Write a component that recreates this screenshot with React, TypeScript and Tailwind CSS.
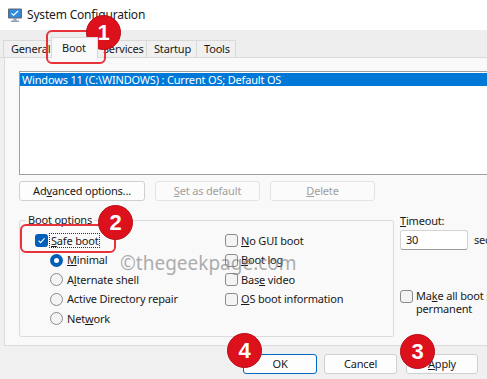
import React from 'react';

function SysIcon() {
  return (
    <svg width="16" height="16" viewBox="0 0 16 16">
      <rect x="1" y="1.5" width="14" height="10" rx="1" fill="#5b6b7c" />
      <rect x="2.2" y="2.7" width="11.6" height="7.6" fill="#2f8be0" />
      <path d="M4.5 6.4 L6.6 8.3 L11 4" fill="none" stroke="#ffffff" strokeWidth="1.2" />
      <rect x="6.5" y="11.5" width="3" height="2" fill="#8c98a5" />
      <rect x="4" y="13.5" width="8" height="1.5" rx="0.5" fill="#8c98a5" />
    </svg>
  );
}

function Check({ checked = false }: { checked?: boolean }) {
  if (checked) {
    return (
      <span className="w-[13px] h-[13px] rounded-[3px] bg-[#005fb8] flex items-center justify-center shrink-0">
        <svg width="9" height="9" viewBox="0 0 9 9">
          <path d="M1.6 4.7 L3.6 6.6 L7.5 2.4" fill="none" stroke="#ffffff" strokeWidth="1.1" />
        </svg>
      </span>
    );
  }
  return <span className="block w-[13px] h-[13px] rounded-[3px] border border-[#8b8b8b] bg-[#f4f4f4] shrink-0" />;
}

function Radio({ checked = false }: { checked?: boolean }) {
  if (checked) {
    return (
      <span className="w-[13px] h-[13px] rounded-full bg-[#005fb8] flex items-center justify-center shrink-0">
        <span className="w-[5px] h-[5px] rounded-full bg-white" />
      </span>
    );
  }
  return <span className="block w-[13px] h-[13px] rounded-full border border-[#8b8b8b] bg-[#f4f4f4] shrink-0" />;
}

function Btn({ children, w, disabled = false, primary = false }: { children: React.ReactNode; w: string; disabled?: boolean; primary?: boolean }) {
  return (
    <div
      className={`${w} h-[20px] shrink-0 rounded-[3px] border flex items-center justify-center ${
        disabled
          ? 'border-[#e3e3e3] bg-[#fbfbfb] text-[#a0a0a0]'
          : primary
          ? 'border-[#0067c0] bg-[#fdfdfd] text-[#1a1a1a]'
          : 'border-[#d0d0d0] bg-[#fdfdfd] text-[#1a1a1a]'
      }`}
    >
      {children}
    </div>
  );
}

function Badge({ n, className }: { n: number; className: string }) {
  return (
    <div
      className={`absolute w-[35px] h-[35px] rounded-full bg-[#dd111b] border border-[#b80d15] text-white font-['Liberation_Sans',sans-serif] font-bold text-[22px] tracking-normal flex items-center justify-center ${className}`}
    >
      {n}
    </div>
  );
}

const tabs = [
  { label: 'General', w: 'w-[50px]' },
  { label: 'Boot', w: 'w-[47px]' },
  { label: 'Services', w: 'w-[52px]' },
  { label: 'Startup', w: 'w-[51px]' },
  { label: 'Tools', w: 'w-[40px]' },
];

export default function App() {
  return (
    <div className="relative w-[487px] h-[379px] overflow-hidden bg-[#f0f0f0] font-['Noto_Sans',sans-serif] text-[11px] tracking-[-0.18px] text-[#1a1a1a]">
      {/* title bar */}
      <div className="h-[30px] bg-white flex items-center pl-[7px] gap-[4px]">
        <SysIcon />
        <span className="text-[12px]">System Configuration</span>
      </div>

      {/* tab strip */}
      <div className="h-[28px] bg-[#eeeeee] border-b border-[#dadada] flex items-end pl-[3px]">
        {tabs.map(({ label, w }) => {
          const active = label === 'Boot';
          return (
            <div
              key={label}
              className={`relative shrink-0 overflow-hidden border border-b-0 border-[#d9d9d9] flex items-center whitespace-nowrap ${w} ${
                active
                  ? 'h-[21px] -mb-px -mx-[2px] bg-[#f9f9f9] z-10 pl-[10px]'
                  : 'h-[17px] bg-[#f0f0f0] pl-[7px] -ml-px first:ml-0'
              }`}
            >
              {label}
            </div>
          );
        })}
      </div>

      {/* panel */}
      <div className="ml-[4px] h-[288px] border-l border-b border-[#dcdcdc] bg-[#f9f9f9] pl-[14px] pt-[13px]">
        <div className="w-[480px] h-[104px] border border-[#a0a0a0] bg-white pt-[1px]">
          <div className="h-[13px] bg-[#0078d7] text-white pl-[2px] leading-[13px] whitespace-nowrap">
            Windows 11 (C:\WINDOWS) : Current OS; Default OS
          </div>
        </div>

        <div className="mt-[6px] flex gap-[10px]">
          <Btn w="w-[126px]">
            Ad<u>v</u>anced options...
          </Btn>
          <Btn w="w-[105px]" disabled>
            <u>S</u>et as default
          </Btn>
          <Btn w="w-[105px]" disabled>
            <u>D</u>elete
          </Btn>
        </div>

        <div className="mt-[12px] flex">
          <fieldset className="w-[375px] h-[124px] shrink-0 border border-[#dcdcdc] rounded-[2px]">
            <legend className="ml-[6px] px-[2px] leading-[14px]">Boot options</legend>
            <div className="pl-[15px] pt-[4px] grid grid-cols-[190px_1fr]">
              <div className="flex flex-col">
                <div className="h-[19.5px] flex items-center gap-[1px]">
                  <Check checked />
                  <span className="border border-dotted border-[#333] px-[1px] leading-[13px]">
                    <u>S</u>afe boot
                  </span>
                </div>
                <div className="h-[19.5px] flex items-center gap-[4px] pl-[15px]">
                  <Radio checked />
                  <span>
                    <u>M</u>inimal
                  </span>
                </div>
                <div className="h-[19.5px] flex items-center gap-[4px] pl-[15px]">
                  <Radio />
                  <span>
                    A<u>l</u>ternate shell
                  </span>
                </div>
                <div className="h-[19.5px] flex items-center gap-[4px] pl-[15px]">
                  <Radio />
                  <span>Active Directory repair</span>
                </div>
                <div className="h-[19.5px] flex items-center gap-[4px] pl-[15px]">
                  <Radio />
                  <span>
                    Net<u>w</u>ork
                  </span>
                </div>
              </div>
              <div className="flex flex-col">
                <div className="h-[19.5px] flex items-center gap-[3px]">
                  <Check />
                  <span>
                    <u>N</u>o GUI boot
                  </span>
                </div>
                <div className="h-[19.5px] flex items-center gap-[3px]">
                  <Check />
                  <span>
                    <u>B</u>oot log
                  </span>
                </div>
                <div className="h-[19.5px] flex items-center gap-[3px]">
                  <Check />
                  <span>
                    Bas<u>e</u> video
                  </span>
                </div>
                <div className="h-[19.5px] flex items-center gap-[3px]">
                  <Check />
                  <span>
                    <u>O</u>S boot information
                  </span>
                </div>
              </div>
            </div>
          </fieldset>

          <div className="ml-[6px] flex flex-col shrink-0">
            <div className="leading-[14px] pt-[1px]">
              <u>T</u>imeout:
            </div>
            <div className="mt-[2px] flex items-center">
              <div className="w-[68px] h-[20px] shrink-0 border border-[#d3d3d3] border-b-[#9a9a9a] rounded-[3px] bg-white pl-[5px] flex items-center">
                30
              </div>
              <span className="ml-[6px] whitespace-nowrap">seconds</span>
            </div>
            <div className="mt-[39px] flex items-start gap-[3px]">
              <span className="mt-[1px] shrink-0">
                <Check />
              </span>
              <span className="leading-[13px] whitespace-nowrap">
                Ma<u>k</u>e all boot settings
                <br />
                permanent
              </span>
            </div>
          </div>
        </div>
      </div>

      {/* dialog buttons */}
      <div className="mt-[8px] flex justify-end pr-[9px]">
        <Btn w="w-[74px]" primary>
          OK
        </Btn>
        <div className="w-[7px]" />
        <Btn w="w-[73px]">Cancel</Btn>
        <div className="w-[9px]" />
        <Btn w="w-[72px]">
          <u>A</u>pply
        </Btn>
      </div>

      {/* watermark */}
      <div className="absolute left-[120px] top-[249px] text-[19px] tracking-normal text-[#7a7a7a] opacity-60 pointer-events-none whitespace-nowrap">
        ©thegeekpage.com
      </div>

      {/* highlight boxes */}
      <div className="absolute left-[46px] top-[30px] w-[60px] h-[34px] rounded-[6px] border-2 border-[#e8323a]" />
      <div className="absolute left-[20px] top-[224px] w-[96px] h-[29px] rounded-[6px] border-2 border-[#e8323a]" />

      <Badge n={1} className="left-[86px] top-[15px]" />
      <Badge n={2} className="left-[98px] top-[205px]" />
      <Badge n={3} className="left-[400px] top-[334px]" />
      <Badge n={4} className="left-[227px] top-[333px]" />
    </div>
  );
}
